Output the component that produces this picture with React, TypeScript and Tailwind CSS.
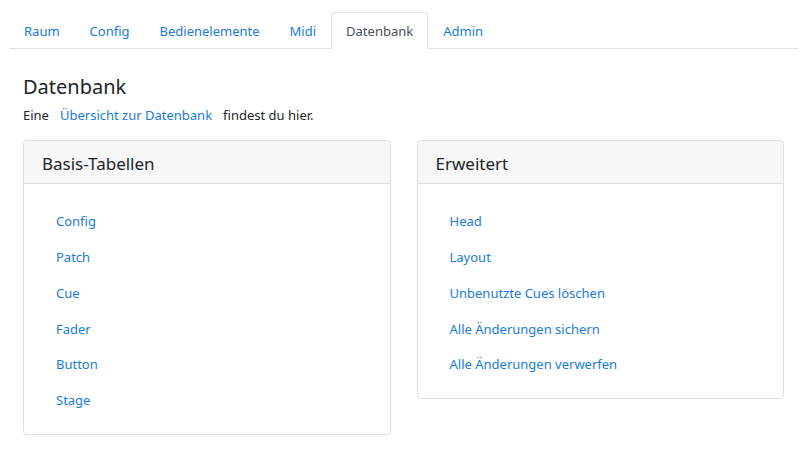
import React from 'react';

const tabs = ['Raum', 'Config', 'Bedienelemente', 'Midi', 'Datenbank', 'Admin'];
const basis = ['Config', 'Patch', 'Cue', 'Fader', 'Button', 'Stage'];
const erweitert = ['Head', 'Layout', 'Unbenutzte Cues löschen', 'Alle Änderungen sichern', 'Alle Änderungen verwerfen'];

const Card = ({ title, items }: { title: string; items: string[] }) => (
  <div className="border border-[#dfdfdf] rounded-[4px] bg-white">
    <div className="h-[43px] px-[18px] pt-[3px] flex items-center bg-[#f7f7f7] border-b border-[#dfdfdf] rounded-t-[4px] text-[17px] text-[#212529]">
      {title}
    </div>
    <ul className="pt-[20px] pb-[15px] pl-[32px]">
      {items.map(item => (
        <li key={item} className="h-[35.8px] flex items-center">
          <a className="text-[13px] text-[#1a7bd8] cursor-pointer">{item}</a>
        </li>
      ))}
    </ul>
  </div>
);

export default function App() {
  return (
    <div className="bg-white min-h-screen font-['Noto_Sans',sans-serif] text-[#212529]">
      <nav className="ml-[9px] mr-[12px] pt-[12px] flex border-b border-[#dee2e6]">
        {tabs.map(t =>
          t === 'Datenbank' ? (
            <div key={t} className="h-[37px] -mb-px px-[14px] pt-[3px] flex items-center bg-white border border-[#dee2e6] border-b-white rounded-t-[4px] text-[13px] text-[#495057]">
              {t}
            </div>
          ) : (
            <div key={t} className="h-[36px] px-[15px] pt-[3px] flex items-center text-[13px] text-[#1a7bd8]">
              {t}
            </div>
          )
        )}
      </nav>
      <div className="pl-[23px] pr-[26px]">
        <h1 className="mt-[24px] text-[20px] leading-[28px] text-[#212529]">Datenbank</h1>
        <p className="mt-[4px] flex gap-[11px] text-[13px] leading-[20px]">
          <span>Eine</span>
          <a className="text-[#1a7bd8]">Übersicht zur Datenbank</a>
          <span>findest du hier.</span>
        </p>
        <div className="mt-[15px] grid grid-cols-2 gap-[26px] items-start">
          <Card title="Basis-Tabellen" items={basis} />
          <Card title="Erweitert" items={erweitert} />
        </div>
      </div>
    </div>
  );
}
